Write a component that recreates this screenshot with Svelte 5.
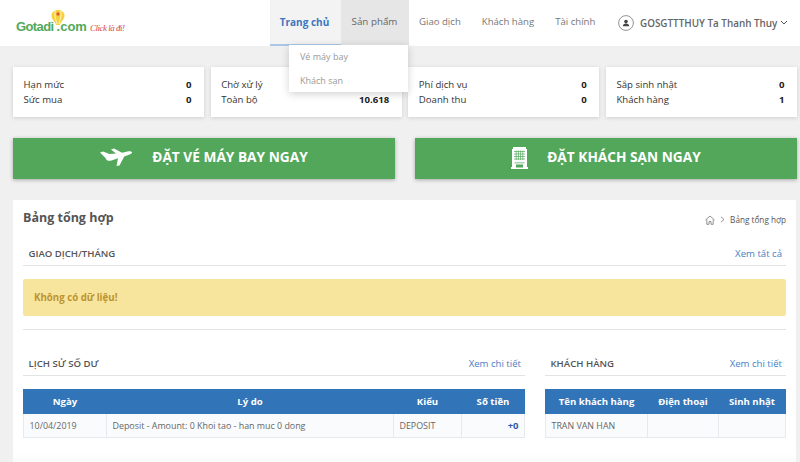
<script>
  const stats = [
    [['Hạn mức', '0'], ['Sức mua', '0']],
    [['Chờ xử lý', ''], ['Toàn bộ', '10.618']],
    [['Phí dịch vụ', '0'], ['Doanh thu', '0']],
    [['Sắp sinh nhật', '0'], ['Khách hàng', '1']],
  ];
  const navItems = ['Giao dịch', 'Khách hàng', 'Tài chính'];
</script>

<div class="page">
  <header class="header">
    <div class="logo">
      <svg class="pin" width="14" height="15" viewBox="0 0 16 17">
        <path d="M8 0C3.500 0 .5 2.800 .5 6.500c0 3.500 3.500 6 5.500 10.500h4c2-4.500 5.500-7 5.500-10.500C15.500 2.800 12.500 0 8 0z" fill="#f5d23c" />
        <path d="M4.800 1.200C3.800 5 5 10 7 16M11.200 1.200C12.200 5 11 10 9 16" fill="none" stroke="#fff" stroke-width=".8" />
        <circle cx="8" cy="4.500" r="1.900" fill="#e4572e" />
      </svg>
      <span class="logo-name">Gotadi</span>
      <span class="logo-dot">.com</span>
      <span class="logo-tag">Click là đi!</span>
    </div>

    <nav class="nav">
      <a class="nav-item active">Trang chủ</a>
      <div class="nav-item open">
        Sản phẩm
        <div class="dropdown">
          <span>Vé máy bay</span>
          <span>Khách sạn</span>
        </div>
      </div>
      {#each navItems as item}
        <a class="nav-item">{item}</a>
      {/each}
    </nav>

    <div class="user">
      <svg width="16" height="16" viewBox="0 0 16 16">
        <circle cx="8" cy="8" r="7.400" fill="none" stroke="#777" stroke-width=".8" />
        <circle cx="8" cy="6.600" r="1.800" fill="#444" />
        <path d="M4.800 11.300c0-2 1.400-2.800 3.200-2.800s3.200.8 3.200 2.800z" fill="#444" />
      </svg>
      <span class="user-name">GOSGTTTHUY Ta Thanh Thuy</span>
      <svg class="chevron" width="8" height="5" viewBox="0 0 8 5">
        <path d="M1 1l3 3 3-3" fill="none" stroke="#555" stroke-width="1" />
      </svg>
    </div>
  </header>

  <main class="main">
    <section class="stats">
      {#each stats as card}
        <div class="stat-card">
          {#each card as [label, value]}
            <div class="stat-row"><span>{label}</span><b>{value}</b></div>
          {/each}
        </div>
      {/each}
    </section>

    <section class="actions">
      <button class="action">
        <svg width="32" height="22" viewBox="0 0 32 22">
          <path d="M0 5.500l3-1 6.500 2.500 6.500-.5-5-4 3-1 8 4.300 6.500-1.500c2-.4 3.500.4 3.500 1.200 0 1-1.500 1.700-3 2.300l-4.800 1.800-4.700 8.900-3 .5 1.500-7.800-6.500 2.200c-3 1-5 0-6-2.500z" fill="#fff" />
        </svg>
        <span>ĐẶT VÉ MÁY BAY NGAY</span>
      </button>
      <button class="action hotel">
        <svg width="17" height="22" viewBox="0 0 17 22">
          <path d="M2 0h13v2h1v18h1v2H0v-2h1V2h1z" fill="#fff" />
          <path d="M3 4.500h11M3 7h11M3 9.500h11M3 12h11M5.200 3.500v9.500M7.400 3.500v9.500M9.600 3.500v9.500M11.800 3.500v9.500" stroke="#52a75b" stroke-width=".7" />
          <path d="M3.500 15.500h10v.8h-10zM5 17.500h7v3h-7z" fill="#52a75b" />
        </svg>
        <span>ĐẶT KHÁCH SẠN NGAY</span>
      </button>
    </section>

    <section class="panel">
      <div class="panel-head">
        <h1>Bảng tổng hợp</h1>
        <div class="crumbs">
          <svg width="10" height="10" viewBox="0 0 10 10">
            <path d="M.5 5L5 1l4.500 4M1.800 4.500V9.300h2.200V6.500h2v2.800h2.200V4.500" fill="none" stroke="#666" stroke-width=".7" />
          </svg>
          <svg width="5" height="7" viewBox="0 0 5 7">
            <path d="M1 .8l3 2.700-3 2.700" fill="none" stroke="#666" stroke-width=".7" />
          </svg>
          <span>Bảng tổng hợp</span>
        </div>
      </div>

      <div class="section-head">
        <h2>GIAO DỊCH/THÁNG</h2>
        <a>Xem tất cả</a>
      </div>
      <div class="alert">Không có dữ liệu!</div>
      <hr class="divider" />

      <div class="tables">
        <div class="col-left">
          <div class="section-head">
            <h2>LỊCH SỬ SỐ DƯ</h2>
            <a>Xem chi tiết</a>
          </div>
          <table>
            <colgroup>
              <col style="width: 83px" />
              <col />
              <col style="width: 68px" />
              <col style="width: 63px" />
            </colgroup>
            <thead>
              <tr><th>Ngày</th><th>Lý do</th><th>Kiểu</th><th>Số tiền</th></tr>
            </thead>
            <tbody>
              <tr>
                <td>10/04/2019</td>
                <td>Deposit - Amount: 0 Khoi tao - han muc 0 dong</td>
                <td>DEPOSIT</td>
                <td class="amount">+0</td>
              </tr>
            </tbody>
          </table>
        </div>
        <div class="col-right">
          <div class="section-head">
            <h2>KHÁCH HÀNG</h2>
            <a>Xem chi tiết</a>
          </div>
          <table>
            <colgroup>
              <col style="width: 102px" />
              <col style="width: 71px" />
              <col />
            </colgroup>
            <thead>
              <tr><th>Tên khách hàng</th><th>Điện thoại</th><th>Sinh nhật</th></tr>
            </thead>
            <tbody>
              <tr><td>TRAN VAN HAN</td><td></td><td></td></tr>
            </tbody>
          </table>
        </div>
      </div>
    </section>
  </main>
</div>

<style>
  :global(body) {
    margin: 0;
    background: #f0f0f0;
  }

  .page {
    height: 462px;
    overflow: hidden;
    font-family: "Open Sans", sans-serif;
    color: #555;
  }

  .header {
    position: relative;
    z-index: 2;
    display: flex;
    align-items: stretch;
    height: 46px;
    background: #fff;
  }

  .logo {
    position: relative;
    width: 270px;
    display: flex;
    align-items: baseline;
    padding: 17px 0 0 16px;
    box-sizing: border-box;
    font-family: "Liberation Sans", sans-serif;
    color: #52a85a;
    font-weight: 700;
    font-size: 13px;
    line-height: 20px;
  }

  .logo-name {
    letter-spacing: -0.6px;
  }

  .pin {
    position: absolute;
    left: 51px;
    top: 10px;
  }

  .logo-dot {
    margin-left: 3px;
  }

  .logo-tag {
    margin-left: 3px;
    font-family: "Liberation Serif", serif;
    font-style: italic;
    font-weight: 400;
    font-size: 9px;
    letter-spacing: -0.5px;
    color: #d8474a;
  }

  .nav {
    display: flex;
    font-size: 9.600px;
    line-height: 44px;
  }

  .nav-item {
    position: relative;
    padding: 0 10.5px;
    color: #777;
  }

  .nav-item.active {
    width: 71px;
    box-sizing: border-box;
    padding: 0 2px 0 0;
    text-align: center;
    font-size: 10px;
    font-weight: 700;
    color: #3b76c0;
    background: #f3f3f3;
    border-bottom: 2px solid #a9c6e6;
  }

  .nav-item.open {
    width: 68px;
    box-sizing: border-box;
    padding: 0 1px 0 0;
    margin-right: -0.5px;
    text-align: center;
    font-size: 9.800px;
    background: #e6e6e6;
    color: #666;
  }

  .dropdown {
    position: absolute;
    top: 45px;
    right: 1px;
    width: 119px;
    height: 47px;
    display: flex;
    flex-direction: column;
    background: #fff;
    box-shadow: 0 2px 8px rgba(0, 0, 0, 0.18);
    text-align: left;
    font-size: 9px;
    line-height: 24px;
    color: #999;
  }

  .dropdown span {
    padding-left: 11px;
  }

  .user {
    position: absolute;
    left: 618px;
    top: 14px;
    display: flex;
    align-items: center;
    gap: 6px;
    height: 17px;
  }

  .user-name {
    font-size: 9.900px;
    font-weight: 600;
    color: #666;
    white-space: nowrap;
  }

  .chevron {
    margin-left: -3px;
  }

  .main {
    padding: 21px 3px 0 13px;
  }

  .stats {
    display: grid;
    grid-template-columns: repeat(4, 191px);
    justify-content: space-between;
  }

  .stat-card {
    height: 50px;
    box-sizing: border-box;
    padding: 10px 12.500px 0 10.500px;
    background: #fff;
    box-shadow: 0 1px 4px rgba(0, 0, 0, 0.14);
    font-size: 9.600px;
    line-height: 15px;
    color: #333;
  }

  .stat-row {
    display: flex;
    justify-content: space-between;
  }

  .stat-row b {
    color: #222;
  }

  .actions {
    display: grid;
    grid-template-columns: 382px 382px;
    justify-content: space-between;
    margin-top: 21px;
  }

  .action {
    display: flex;
    align-items: center;
    justify-content: center;
    gap: 20px;
    height: 41px;
    padding: 0 0 5px;
    border: none;
    background: #52a75b;
    box-shadow: 0 1px 4px rgba(0, 0, 0, 0.3);
    color: #fff;
    font-family: inherit;
    font-size: 13.700px;
    font-weight: 700;
  }

  .action svg {
    margin-top: 3px;
  }

  .action.hotel {
    gap: 19px;
  }

  .panel {
    margin-top: 21px;
    margin-right: 1px;
    padding: 8px 10px 0;
    height: 262px;
    background: linear-gradient(#fff 94%, #f5f5f5);
  }

  .panel-head {
    display: flex;
    justify-content: space-between;
    align-items: center;
    height: 18px;
  }

  h1 {
    margin: 0;
    font-size: 12.500px;
    font-weight: 700;
    color: #555;
  }

  .crumbs {
    display: flex;
    align-items: center;
    gap: 5px;
    margin: 5px 0 0;
    font-size: 8.200px;
    color: #555;
  }

  .section-head {
    display: flex;
    justify-content: space-between;
    align-items: center;
    height: 27px;
    box-sizing: border-box;
    padding: 2px 4px 0 5.500px;
    border-bottom: 1px solid #e3e3e3;
  }

  .panel-head + .section-head {
    margin-top: 13px;
  }

  .tables .section-head {
    padding-top: 3px;
  }

  h2 {
    margin: 0;
    font-size: 9.600px;
    font-weight: 600;
    color: #555;
  }

  .section-head a {
    font-size: 9.600px;
    color: #4a80c4;
  }

  .alert {
    height: 37px;
    margin-top: 13px;
    padding-left: 11px;
    border-radius: 2px;
    background: #f8e59d;
    color: #bb9430;
    font-size: 9.700px;
    font-weight: 700;
    line-height: 37px;
  }

  .divider {
    margin: 13px 0 0;
    border: none;
    border-top: 1px solid #e3e3e3;
  }

  .tables {
    display: grid;
    grid-template-columns: 502px 241px;
    justify-content: space-between;
    margin-top: 19px;
  }

  table {
    width: 100%;
    margin-top: 13px;
    border-collapse: collapse;
    table-layout: fixed;
    font-size: 8.900px;
  }

  th {
    height: 23px;
    padding: 0;
    background: #3174b8;
    border: 1px solid #3174b8;
    border-left-color: #8ba9c9;
    color: #fff;
    font-size: 9.600px;
    font-weight: 700;
  }

  th:first-child {
    border-left-color: #3174b8;
  }

  td {
    height: 23px;
    padding: 0 5.500px;
    border: 1px solid #e6e9ed;
    background: #fafbfc;
    color: #666;
    white-space: nowrap;
  }

  .amount {
    text-align: right;
    color: #2a5db0;
    font-size: 9.500px;
    font-weight: 700;
  }
</style>
